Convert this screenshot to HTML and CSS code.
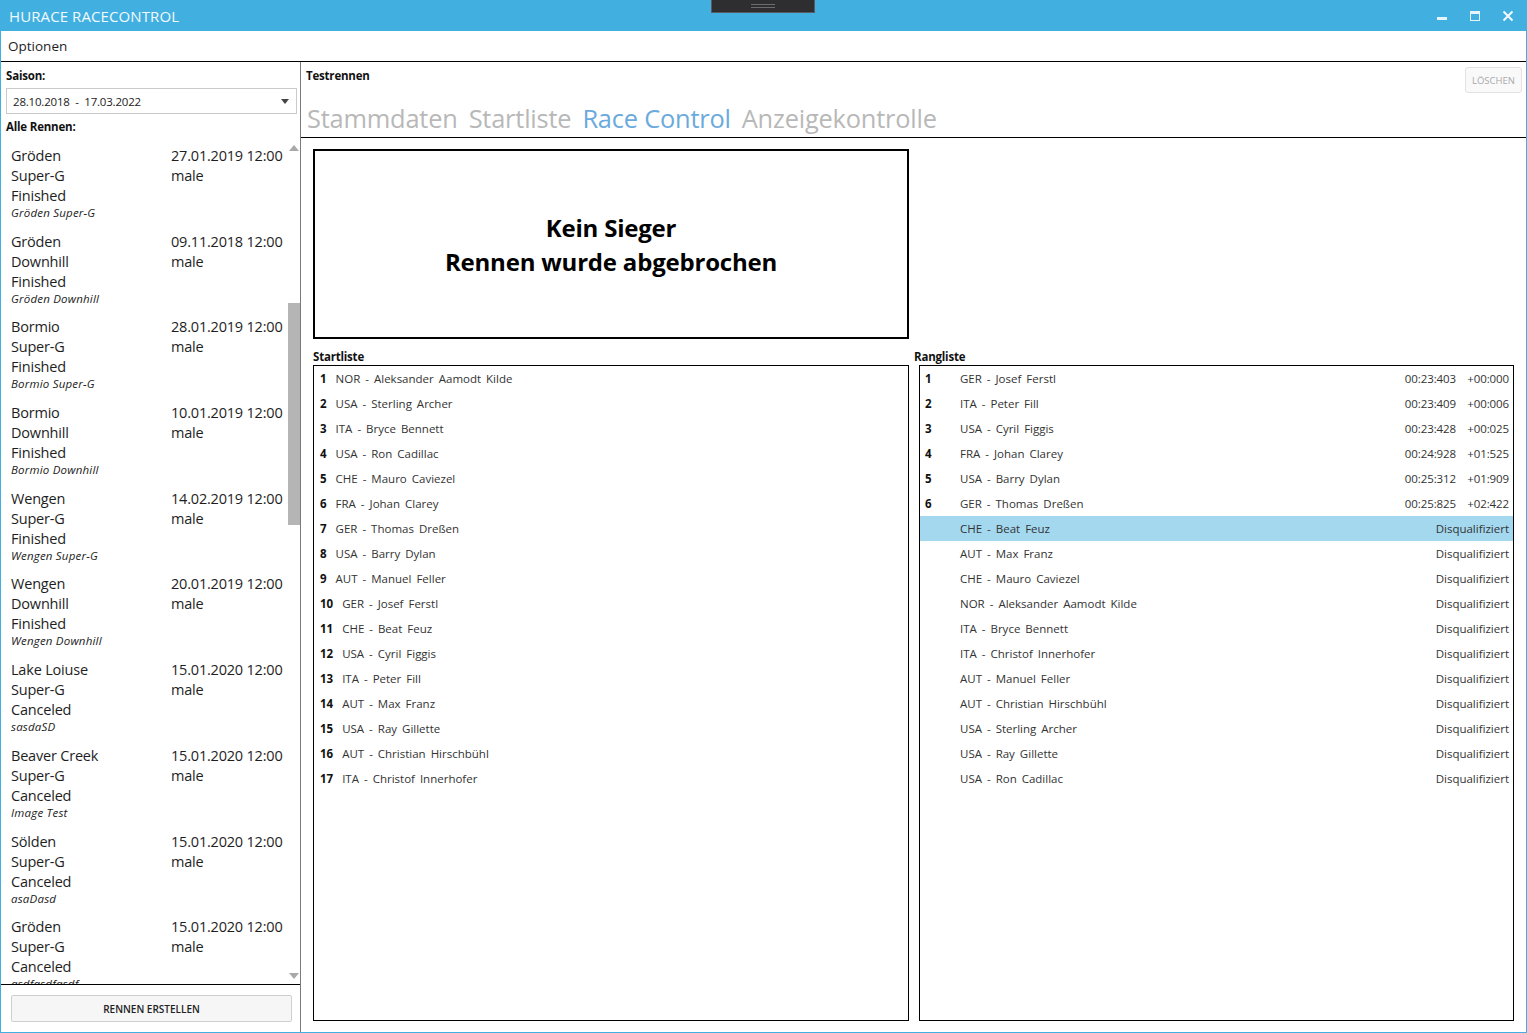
FILE: index.html
```html
<!DOCTYPE html>
<html>
<head>
<meta charset="utf-8">
<link rel="stylesheet" href="styles.css">
</head>
<body>
<div class="window">
  <div class="titlebar">
    <span class="title">HURACE RACECONTROL</span>
    <div class="grip"><span></span><span></span></div>
    <div class="controls">
      <svg width="12" height="12" viewBox="0 0 12 12"><rect x="1" y="7" width="10" height="3" fill="#e6f4fb"/></svg>
      <svg width="12" height="12" viewBox="0 0 12 12"><rect x="1.5" y="1.5" width="9" height="9" fill="none" stroke="#e6f4fb" stroke-width="1"/><rect x="1" y="1" width="10" height="3" fill="#e6f4fb"/></svg>
      <svg width="12" height="12" viewBox="0 0 12 12"><path d="M1.5 1.5 L10.5 10.5 M10.5 1.5 L1.5 10.5" stroke="#f3fafd" stroke-width="2"/></svg>
    </div>
  </div>
  <div class="menubar"><span>Optionen</span></div>
  <div class="main">
    <aside class="left">
      <div class="label">Saison:</div>
      <div class="combo"><span>28.10.2018&nbsp; - &nbsp;17.03.2022</span><svg width="8" height="5" viewBox="0 0 8 5"><path d="M0 0 H8 L4 5 Z" fill="#444"/></svg></div>
      <div class="label label2">Alle Rennen:</div>
      <div class="racelist">
        <div class="items">
          <div class="item"><div class="c1"><div>Gröden</div><div>Super-G</div><div>Finished</div><div class="desc">Gröden Super-G</div></div><div class="c2"><div>27.01.2019 12:00</div><div>male</div></div></div>
          <div class="item"><div class="c1"><div>Gröden</div><div>Downhill</div><div>Finished</div><div class="desc">Gröden Downhill</div></div><div class="c2"><div>09.11.2018 12:00</div><div>male</div></div></div>
          <div class="item"><div class="c1"><div>Bormio</div><div>Super-G</div><div>Finished</div><div class="desc">Bormio Super-G</div></div><div class="c2"><div>28.01.2019 12:00</div><div>male</div></div></div>
          <div class="item"><div class="c1"><div>Bormio</div><div>Downhill</div><div>Finished</div><div class="desc">Bormio Downhill</div></div><div class="c2"><div>10.01.2019 12:00</div><div>male</div></div></div>
          <div class="item"><div class="c1"><div>Wengen</div><div>Super-G</div><div>Finished</div><div class="desc">Wengen Super-G</div></div><div class="c2"><div>14.02.2019 12:00</div><div>male</div></div></div>
          <div class="item"><div class="c1"><div>Wengen</div><div>Downhill</div><div>Finished</div><div class="desc">Wengen Downhill</div></div><div class="c2"><div>20.01.2019 12:00</div><div>male</div></div></div>
          <div class="item"><div class="c1"><div>Lake Loiuse</div><div>Super-G</div><div>Canceled</div><div class="desc">sasdaSD</div></div><div class="c2"><div>15.01.2020 12:00</div><div>male</div></div></div>
          <div class="item"><div class="c1"><div>Beaver Creek</div><div>Super-G</div><div>Canceled</div><div class="desc">Image Test</div></div><div class="c2"><div>15.01.2020 12:00</div><div>male</div></div></div>
          <div class="item"><div class="c1"><div>Sölden</div><div>Super-G</div><div>Canceled</div><div class="desc">asaDasd</div></div><div class="c2"><div>15.01.2020 12:00</div><div>male</div></div></div>
          <div class="item"><div class="c1"><div>Gröden</div><div>Super-G</div><div>Canceled</div><div class="desc">asdfasdfasdf</div></div><div class="c2"><div>15.01.2020 12:00</div><div>male</div></div></div>
        </div>
        <div class="scrollbar">
          <svg class="arr" width="10" height="6" viewBox="0 0 10 6"><path d="M0 6 L5 0 L10 6 Z" fill="#a8a8a8"/></svg>
          <div class="thumb"></div>
          <div class="spacer"></div>
          <svg class="arr" width="10" height="6" viewBox="0 0 10 6"><path d="M0 0 L10 0 L5 6 Z" fill="#a8a8a8"/></svg>
        </div>
      </div>
      <div class="footer"><button class="btn">RENNEN ERSTELLEN</button></div>
    </aside>
    <section class="right">
      <div class="head">
        <div class="racename">Testrennen</div>
        <button class="delbtn">LÖSCHEN</button>
      </div>
      <div class="tabs">
        <span class="tab">Stammdaten</span>
        <span class="tab">Startliste</span>
        <span class="tab active">Race Control</span>
        <span class="tab">Anzeigekontrolle</span>
      </div>
      <div class="content">
        <div class="winner">
          <div>Kein Sieger</div>
          <div>Rennen wurde abgebrochen</div>
        </div>
        <div class="lists">
          <div class="col">
            <div class="label">Startliste</div>
            <div class="box">
              <div class="srow"><b>1</b><span>NOR - Aleksander Aamodt Kilde</span></div>
              <div class="srow"><b>2</b><span>USA - Sterling Archer</span></div>
              <div class="srow"><b>3</b><span>ITA - Bryce Bennett</span></div>
              <div class="srow"><b>4</b><span>USA - Ron Cadillac</span></div>
              <div class="srow"><b>5</b><span>CHE - Mauro Caviezel</span></div>
              <div class="srow"><b>6</b><span>FRA - Johan Clarey</span></div>
              <div class="srow"><b>7</b><span>GER - Thomas Dreßen</span></div>
              <div class="srow"><b>8</b><span>USA - Barry Dylan</span></div>
              <div class="srow"><b>9</b><span>AUT - Manuel Feller</span></div>
              <div class="srow"><b>10</b><span>GER - Josef Ferstl</span></div>
              <div class="srow"><b>11</b><span>CHE - Beat Feuz</span></div>
              <div class="srow"><b>12</b><span>USA - Cyril Figgis</span></div>
              <div class="srow"><b>13</b><span>ITA - Peter Fill</span></div>
              <div class="srow"><b>14</b><span>AUT - Max Franz</span></div>
              <div class="srow"><b>15</b><span>USA - Ray Gillette</span></div>
              <div class="srow"><b>16</b><span>AUT - Christian Hirschbühl</span></div>
              <div class="srow"><b>17</b><span>ITA - Christof Innerhofer</span></div>
            </div>
          </div>
          <div class="col col2">
            <div class="label">Rangliste</div>
            <div class="box rbox">
              <div class="rrow"><b>1</b><span class="nm">GER - Josef Ferstl</span><span class="tm">00:23:403</span><span class="df">+00:000</span></div>
              <div class="rrow"><b>2</b><span class="nm">ITA - Peter Fill</span><span class="tm">00:23:409</span><span class="df">+00:006</span></div>
              <div class="rrow"><b>3</b><span class="nm">USA - Cyril Figgis</span><span class="tm">00:23:428</span><span class="df">+00:025</span></div>
              <div class="rrow"><b>4</b><span class="nm">FRA - Johan Clarey</span><span class="tm">00:24:928</span><span class="df">+01:525</span></div>
              <div class="rrow"><b>5</b><span class="nm">USA - Barry Dylan</span><span class="tm">00:25:312</span><span class="df">+01:909</span></div>
              <div class="rrow"><b>6</b><span class="nm">GER - Thomas Dreßen</span><span class="tm">00:25:825</span><span class="df">+02:422</span></div>
              <div class="rrow sel"><b></b><span class="nm">CHE - Beat Feuz</span><span class="dq">Disqualifiziert</span></div>
              <div class="rrow"><b></b><span class="nm">AUT - Max Franz</span><span class="dq">Disqualifiziert</span></div>
              <div class="rrow"><b></b><span class="nm">CHE - Mauro Caviezel</span><span class="dq">Disqualifiziert</span></div>
              <div class="rrow"><b></b><span class="nm">NOR - Aleksander Aamodt Kilde</span><span class="dq">Disqualifiziert</span></div>
              <div class="rrow"><b></b><span class="nm">ITA - Bryce Bennett</span><span class="dq">Disqualifiziert</span></div>
              <div class="rrow"><b></b><span class="nm">ITA - Christof Innerhofer</span><span class="dq">Disqualifiziert</span></div>
              <div class="rrow"><b></b><span class="nm">AUT - Manuel Feller</span><span class="dq">Disqualifiziert</span></div>
              <div class="rrow"><b></b><span class="nm">AUT - Christian Hirschbühl</span><span class="dq">Disqualifiziert</span></div>
              <div class="rrow"><b></b><span class="nm">USA - Sterling Archer</span><span class="dq">Disqualifiziert</span></div>
              <div class="rrow"><b></b><span class="nm">USA - Ray Gillette</span><span class="dq">Disqualifiziert</span></div>
              <div class="rrow"><b></b><span class="nm">USA - Ron Cadillac</span><span class="dq">Disqualifiziert</span></div>
            </div>
          </div>
        </div>
      </div>
    </section>
  </div>
</div>
</body>
</html>
```
FILE: styles.css
```css
* { box-sizing: border-box; }
html, body { margin: 0; padding: 0; }
body {
  width: 1527px;
  height: 1033px;
  overflow: hidden;
  font-family: "Open Sans", "Noto Sans", sans-serif;
  color: #1e1e1e;
  background: #fff;
}
.window {
  height: 1033px;
  display: flex;
  flex-direction: column;
  border: 1px solid #41b0e0;
  border-top: 0;
}
.titlebar {
  position: relative;
  height: 31px;
  background: #41b0e0;
  display: flex;
  align-items: center;
  padding-left: 9px;
  margin: 0 -1px;
}
.title {
  color: #f2f9fd;
  font-size: 15px;
  letter-spacing: 0.1px;
  padding-top: 1px;
}
.grip {
  position: absolute;
  left: 711px;
  top: 0;
  width: 104px;
  height: 13px;
  background: #2e2e30;
  border: 1px solid #5a5a5e;
  border-top: 0;
  display: flex;
  flex-direction: column;
  align-items: center;
  justify-content: center;
  gap: 2px;
}
.grip span { display: block; width: 24px; height: 1px; background: #6c6c70; }
.controls {
  margin-left: auto;
  display: flex;
  gap: 21px;
  padding-right: 13px;
  padding-top: 1px;
}
.menubar {
  height: 31px;
  border-bottom: 1px solid #000;
  display: flex;
  align-items: center;
  padding-left: 7px;
  font-size: 13.5px;
  color: #1e1e1e;
}
.main {
  flex: 1;
  display: flex;
  min-height: 0;
}
.left {
  width: 300px;
  border-right: 1px solid #7a7a7a;
  display: flex;
  flex-direction: column;
  padding-top: 6px;
}
.label {
  font-size: 11.5px;
  font-weight: 700;
  line-height: 16px;
  color: #111;
  padding-left: 5px;
  letter-spacing: -0.2px;
}
.combo {
  margin: 4px 3px 0 5px;
  height: 26px;
  border: 1px solid #cacaca;
  display: flex;
  align-items: center;
  justify-content: space-between;
  padding: 0 7px 0 6px;
  font-size: 11.5px;
  color: #222;
  letter-spacing: -0.2px;
}
.label2 { margin-top: 5px; }
.racelist {
  margin-top: 7px;
  flex: 1;
  min-height: 0;
  display: flex;
  overflow: hidden;
}
.items { flex: 1; overflow: hidden; }
.item {
  height: 85.7px;
  padding: 4px 0 0 10px;
  display: flex;
  font-size: 14.5px;
  line-height: 20px;
  color: #1e1e1e;
  letter-spacing: -0.2px;
}
.c1 { width: 160px; }
.desc {
  font-size: 11.5px;
  font-style: italic;
  line-height: 14px;
  color: #222;
  letter-spacing: 0.2px;
}
.scrollbar {
  width: 12px;
  display: flex;
  flex-direction: column;
  align-items: center;
}
.arr { margin-top: 3px; flex: none; }
.thumb {
  width: 12px;
  height: 222px;
  margin-top: 152px;
  background: #b5b5b5;
  flex: none;
}
.spacer { flex: 1; }
.scrollbar .arr:last-child { margin: 0 0 5px; }
.footer {
  height: 48px;
  border-top: 1px solid #000;
  padding: 10px 8px 0 10px;
}
.btn {
  width: 281px;
  height: 27px;
  border: 1px solid #cfcfcf;
  border-radius: 2px;
  background: #f6f6f6;
  font-family: "Open Sans", sans-serif;
  font-size: 10px;
  font-weight: 600;
  color: #222;
  padding: 0;
}
.right {
  flex: 1;
  display: flex;
  flex-direction: column;
  min-width: 0;
}
.head {
  display: flex;
  justify-content: space-between;
  align-items: flex-start;
  padding: 5px 4px 0 0;
  height: 31px;
}
.racename {
  font-size: 11.5px;
  font-weight: 700;
  line-height: 16px;
  margin-top: 1px;
  padding-left: 5px;
  color: #111;
  letter-spacing: -0.2px;
}
.delbtn {
  width: 57px;
  height: 26px;
  border: 1px solid #e2e2e2;
  border-radius: 3px;
  background: #f9f9f9;
  color: #a9a9a9;
  font-family: "Open Sans", sans-serif;
  font-size: 9.5px;
  padding: 0;
}
.tabs {
  height: 45px;
  border-bottom: 1px solid #000;
  display: flex;
  align-items: flex-end;
  gap: 11px;
  padding: 0 0 1px 6px;
}
.tab {
  font-size: 25.4px;
  line-height: 36px;
  color: #b8b8b8;
  letter-spacing: -0.2px;
}
.tab.active { color: #6aaadd; }
.content {
  flex: 1;
  display: flex;
  flex-direction: column;
  padding: 11px 12px 11px 12px;
  min-height: 0;
}
.winner {
  width: 596px;
  height: 190px;
  border: 2px solid #000;
  display: flex;
  flex-direction: column;
  align-items: center;
  justify-content: center;
  font-size: 24px;
  font-weight: 700;
  line-height: 34px;
  color: #000;
  padding-top: 2px;
  letter-spacing: -0.2px;
}
.lists {
  flex: 1;
  margin-top: 10px;
  display: grid;
  grid-template-columns: 596px 1fr;
  gap: 5px;
  min-height: 0;
}
.col { display: flex; flex-direction: column; min-height: 0; }
.col .label { padding-left: 0; }
.col2 .box { margin-left: 5px; }
.box {
  flex: 1;
  border: 1px solid #000;
  padding-top: 0;
}
.srow, .rrow {
  height: 25px;
  display: flex;
  align-items: center;
  font-size: 11.5px;
  color: #333;
  letter-spacing: 0;
  word-spacing: 2px;
}
.srow { padding-left: 6px; }
.srow b, .rrow b {
  font-weight: 700;
  color: #111;
  margin-right: 9px;
}
.rrow { padding: 0 4px 0 5px; }
.rrow.sel { background: #a3d8ef; }
.rrow b { width: 26px; margin-right: 9px; }
.rrow .nm { flex: 1; }
.rrow .tm { margin-right: 7px; letter-spacing: -0.1px; }
.rrow .df { width: 46px; text-align: right; letter-spacing: -0.1px; }
```
